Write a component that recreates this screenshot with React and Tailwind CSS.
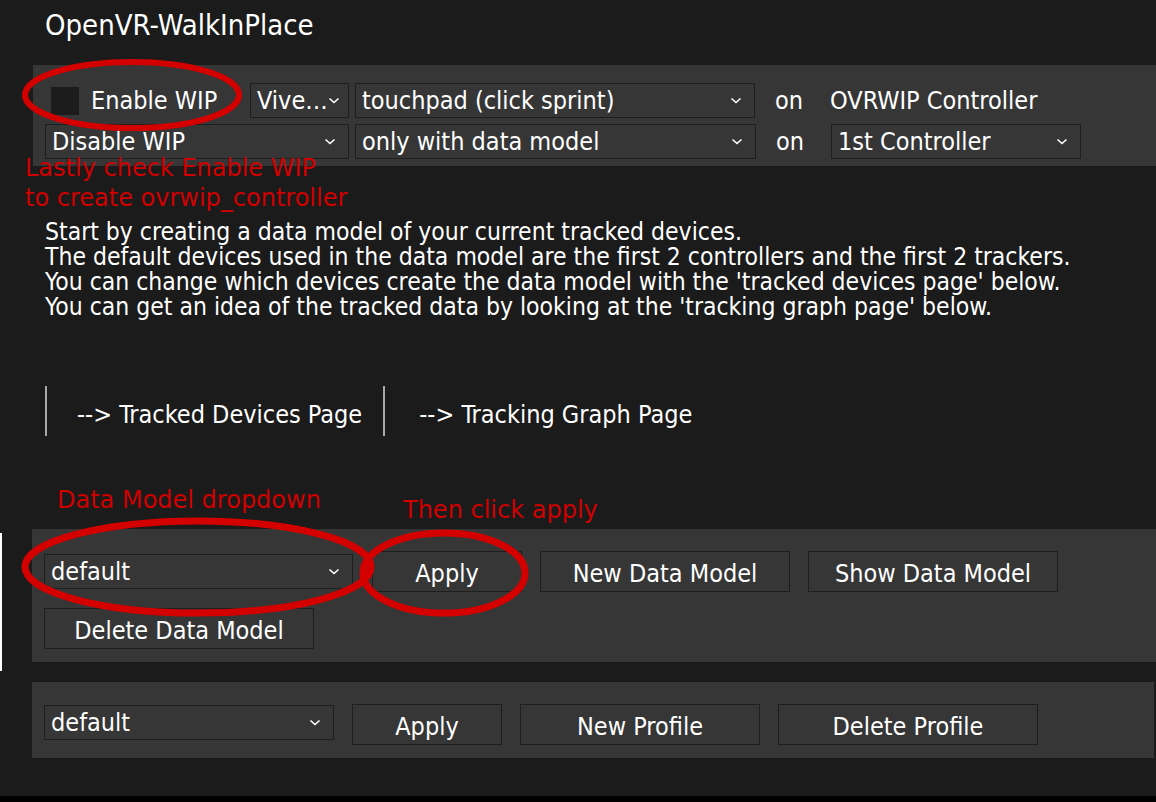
import React from "react";

const font = { fontFamily: '"DejaVu Sans Condensed", "DejaVu Sans", Tahoma, sans-serif' };
const redFont = { fontFamily: '"DejaVu Sans", Verdana, sans-serif' };

function Chevron() {
  return (
    <svg width="12" height="7" viewBox="0 0 12 7" className="shrink-0">
      <polyline points="1.5,1.5 6,5.5 10.5,1.5" fill="none" stroke="#ffffff" strokeWidth="1.6" />
    </svg>
  );
}

function Dropdown({ label, w }) {
  return (
    <div className={`${w} h-[35px] shrink-0 border border-[#1e1e1e] flex items-center justify-between pl-[6px] pr-[12px] text-white text-[25px]`}>
      <span className="leading-none whitespace-nowrap">{label}</span>
      <Chevron />
    </div>
  );
}

function Btn({ label, w }) {
  return (
    <div className={`${w} h-[41px] shrink-0 border border-[#1e1e1e] flex items-center justify-center text-white text-[25px] pt-[3px]`}>
      <span className="leading-none whitespace-nowrap">{label}</span>
    </div>
  );
}

export default function App() {
  return (
    <div className="relative w-[1156px] h-[802px] bg-[#1b1b1b] overflow-hidden flex flex-col" style={font}>
      {/* Title */}
      <div className="h-[65px] pl-[45px] pt-[11px] text-white text-[29px] leading-none">OpenVR-WalkInPlace</div>

      {/* Top panel */}
      <div className="ml-[33px] h-[101px] bg-[#363636] pl-[12px] pt-[18px] flex flex-col gap-[6px]">
        <div className="flex items-center h-[35px]">
          <div className="w-[199px] shrink-0 flex items-center">
            <div className="ml-[6px] w-[28px] h-[28px] bg-[#1c1c1c]" />
            <span className="ml-[12px] text-white text-[25px] leading-none">Enable WIP</span>
          </div>
          <div className="ml-[6px] w-[99px] h-[35px] border border-[#1e1e1e] flex items-center pl-[6px] pr-[6px] text-white text-[25px] overflow-hidden">
            <span className="leading-none whitespace-nowrap">Vive…</span>
            <Chevron />
          </div>
          <div className="ml-[6px]">
            <Dropdown label="touchpad (click sprint)" w="w-[400px]" />
          </div>
          <span className="ml-[20px] w-[55px] text-white text-[25px] leading-none">on</span>
          <span className="text-white text-[25px] leading-none">OVRWIP Controller</span>
        </div>
        <div className="flex items-center h-[35px]">
          <Dropdown label="Disable WIP" w="w-[304px]" />
          <div className="ml-[6px]">
            <Dropdown label="only with data model" w="w-[401px]" />
          </div>
          <span className="ml-[20px] w-[55px] text-white text-[25px] leading-none">on</span>
          <Dropdown label="1st Controller" w="w-[250px]" />
        </div>
      </div>

      {/* Paragraph */}
      <div className="mt-[53px] pl-[45px] text-white text-[24.5px] leading-[25px] whitespace-nowrap">
        <p>Start by creating a data model of your current tracked devices.</p>
        <p>The default devices used in the data model are the first 2 controllers and the first 2 trackers.</p>
        <p>You can change which devices create the data model with the 'tracked devices page' below.</p>
        <p>You can get an idea of the tracked data by looking at the 'tracking graph page' below.</p>
      </div>

      {/* Links */}
      <div className="mt-[67px] ml-[45px] h-[50px] flex items-center text-white text-[25px]">
        <div className="w-[2px] h-[50px] bg-[#a8a8a8]" />
        <span className="ml-[30px] pt-[7px] leading-none whitespace-nowrap">--&gt; Tracked Devices Page</span>
        <div className="ml-[21px] w-[2px] h-[50px] bg-[#a8a8a8]" />
        <span className="ml-[34px] pt-[7px] leading-none whitespace-nowrap">--&gt; Tracking Graph Page</span>
      </div>

      {/* Data model panel */}
      <div className="mt-[93px] flex items-start">
        <div className="mt-[4px] w-[2px] h-[138px] bg-white shrink-0" />
        <div className="ml-[30px] flex-1 h-[133px] bg-[#363636] pl-[12px] pt-[22px] flex flex-col gap-[16px]">
          <div className="flex items-center gap-[18px]">
            <Dropdown label="default" w="w-[309px]" />
            <div className="ml-[1px]"><Btn label="Apply" w="w-[150px]" /></div>
            <Btn label="New Data Model" w="w-[250px]" />
            <Btn label="Show Data Model" w="w-[250px]" />
          </div>
          <div className="flex">
            <Btn label="Delete Data Model" w="w-[270px]" />
          </div>
        </div>
      </div>

      {/* Profile panel */}
      <div className="mt-[11px] ml-[32px] w-[1122px] h-[76px] bg-[#363636] pl-[12px] pt-[22px] flex items-start gap-[18px]">
        <div className="mt-[1px]"><Dropdown label="default" w="w-[290px]" /></div>
        <Btn label="Apply" w="w-[150px]" />
        <Btn label="New Profile" w="w-[240px]" />
        <Btn label="Delete Profile" w="w-[260px]" />
      </div>

      <div className="flex-1" />
      <div className="h-[6px] bg-black" />

      {/* Annotations overlay */}
      <svg className="absolute inset-0 pointer-events-none" width="1156" height="802">
        <ellipse cx="132" cy="95" rx="107" ry="33" fill="none" stroke="#d40000" strokeWidth="6" />
        <ellipse cx="198" cy="567" rx="173" ry="46" fill="none" stroke="#d40000" strokeWidth="7" />
        <ellipse cx="444" cy="573" rx="81" ry="40" fill="none" stroke="#d40000" strokeWidth="7" />
      </svg>
      <div className="absolute left-[25px] top-[153px] text-[#d00000] text-[24px] leading-[30px] pointer-events-none whitespace-nowrap" style={redFont}>
        <div>Lastly check Enable WIP</div>
        <div>to create ovrwip_controller</div>
      </div>
      <div className="absolute left-[57px] top-[488px] text-[#d00000] text-[24px] leading-none whitespace-nowrap" style={redFont}>Data Model dropdown</div>
      <div className="absolute left-[403px] top-[498px] text-[#d00000] text-[24px] leading-none whitespace-nowrap" style={redFont}>Then click apply</div>
    </div>
  );
}
